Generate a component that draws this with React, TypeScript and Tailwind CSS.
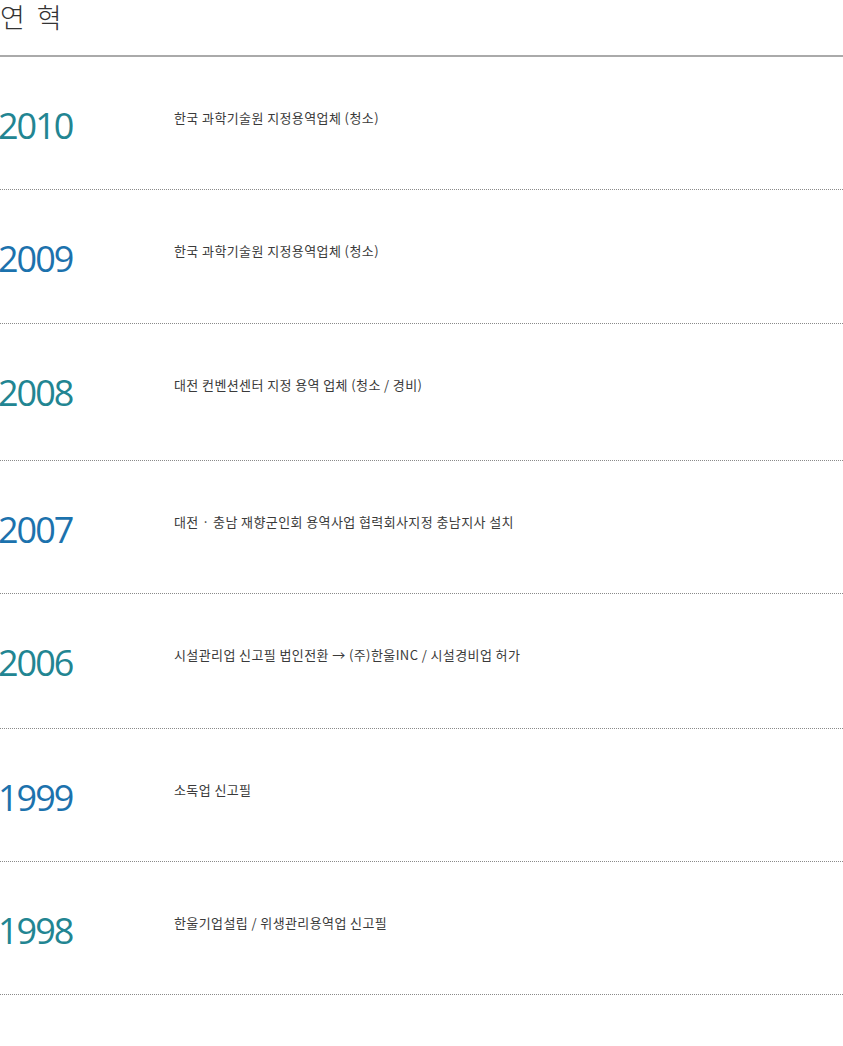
import React from "react";

const items: { year: string; text: string; teal: boolean; h: string }[] = [
  { year: "2010", text: "한국 과학기술원 지정용역업체 (청소)", teal: true, h: "h-[133px]" },
  { year: "2009", text: "한국 과학기술원 지정용역업체 (청소)", teal: false, h: "h-[134px]" },
  { year: "2008", text: "대전 컨벤션센터 지정 용역 업체 (청소 / 경비)", teal: true, h: "h-[137px]" },
  { year: "2007", text: "대전 · 충남 재향군인회 용역사업 협력회사지정 충남지사 설치", teal: false, h: "h-[133px]" },
  { year: "2006", text: "시설관리업 신고필 법인전환 → (주)한울INC / 시설경비업 허가", teal: true, h: "h-[135px]" },
  { year: "1999", text: "소독업 신고필", teal: false, h: "h-[133px]" },
  { year: "1998", text: "한울기업설립 / 위생관리용역업 신고필", teal: true, h: "h-[133px]" },
];

export default function App() {
  return (
    <div className="w-[843px] bg-white" style={{ fontFamily: '"Noto Sans CJK KR", "Noto Sans", sans-serif' }}>
      <div className="h-[57px] border-b-2 border-[#aaaaaa] pt-[1px]">
        <h1 className="text-[27px] leading-[32px] font-light text-[#333] tracking-[3px]">연 혁</h1>
      </div>
      {items.map((it) => (
        <div key={it.year} className={`${it.h} border-b border-dotted border-[#8a8a8a] flex items-start`}>
          <div
            className={`w-[174px] pt-[49px] text-[36px] leading-[40px] tracking-[-2px] ${it.teal ? "text-[#228592]" : "text-[#1c72ad]"}`}
            style={{ fontFamily: '"Open Sans", sans-serif' }}
          >
            <span className="-ml-[2px]">{it.year}</span>
          </div>
          <div className="pt-[52px] text-[13px] leading-[18px] text-[#3a3a3a] tracking-[0.4px]">{it.text}</div>
        </div>
      ))}
    </div>
  );
}
